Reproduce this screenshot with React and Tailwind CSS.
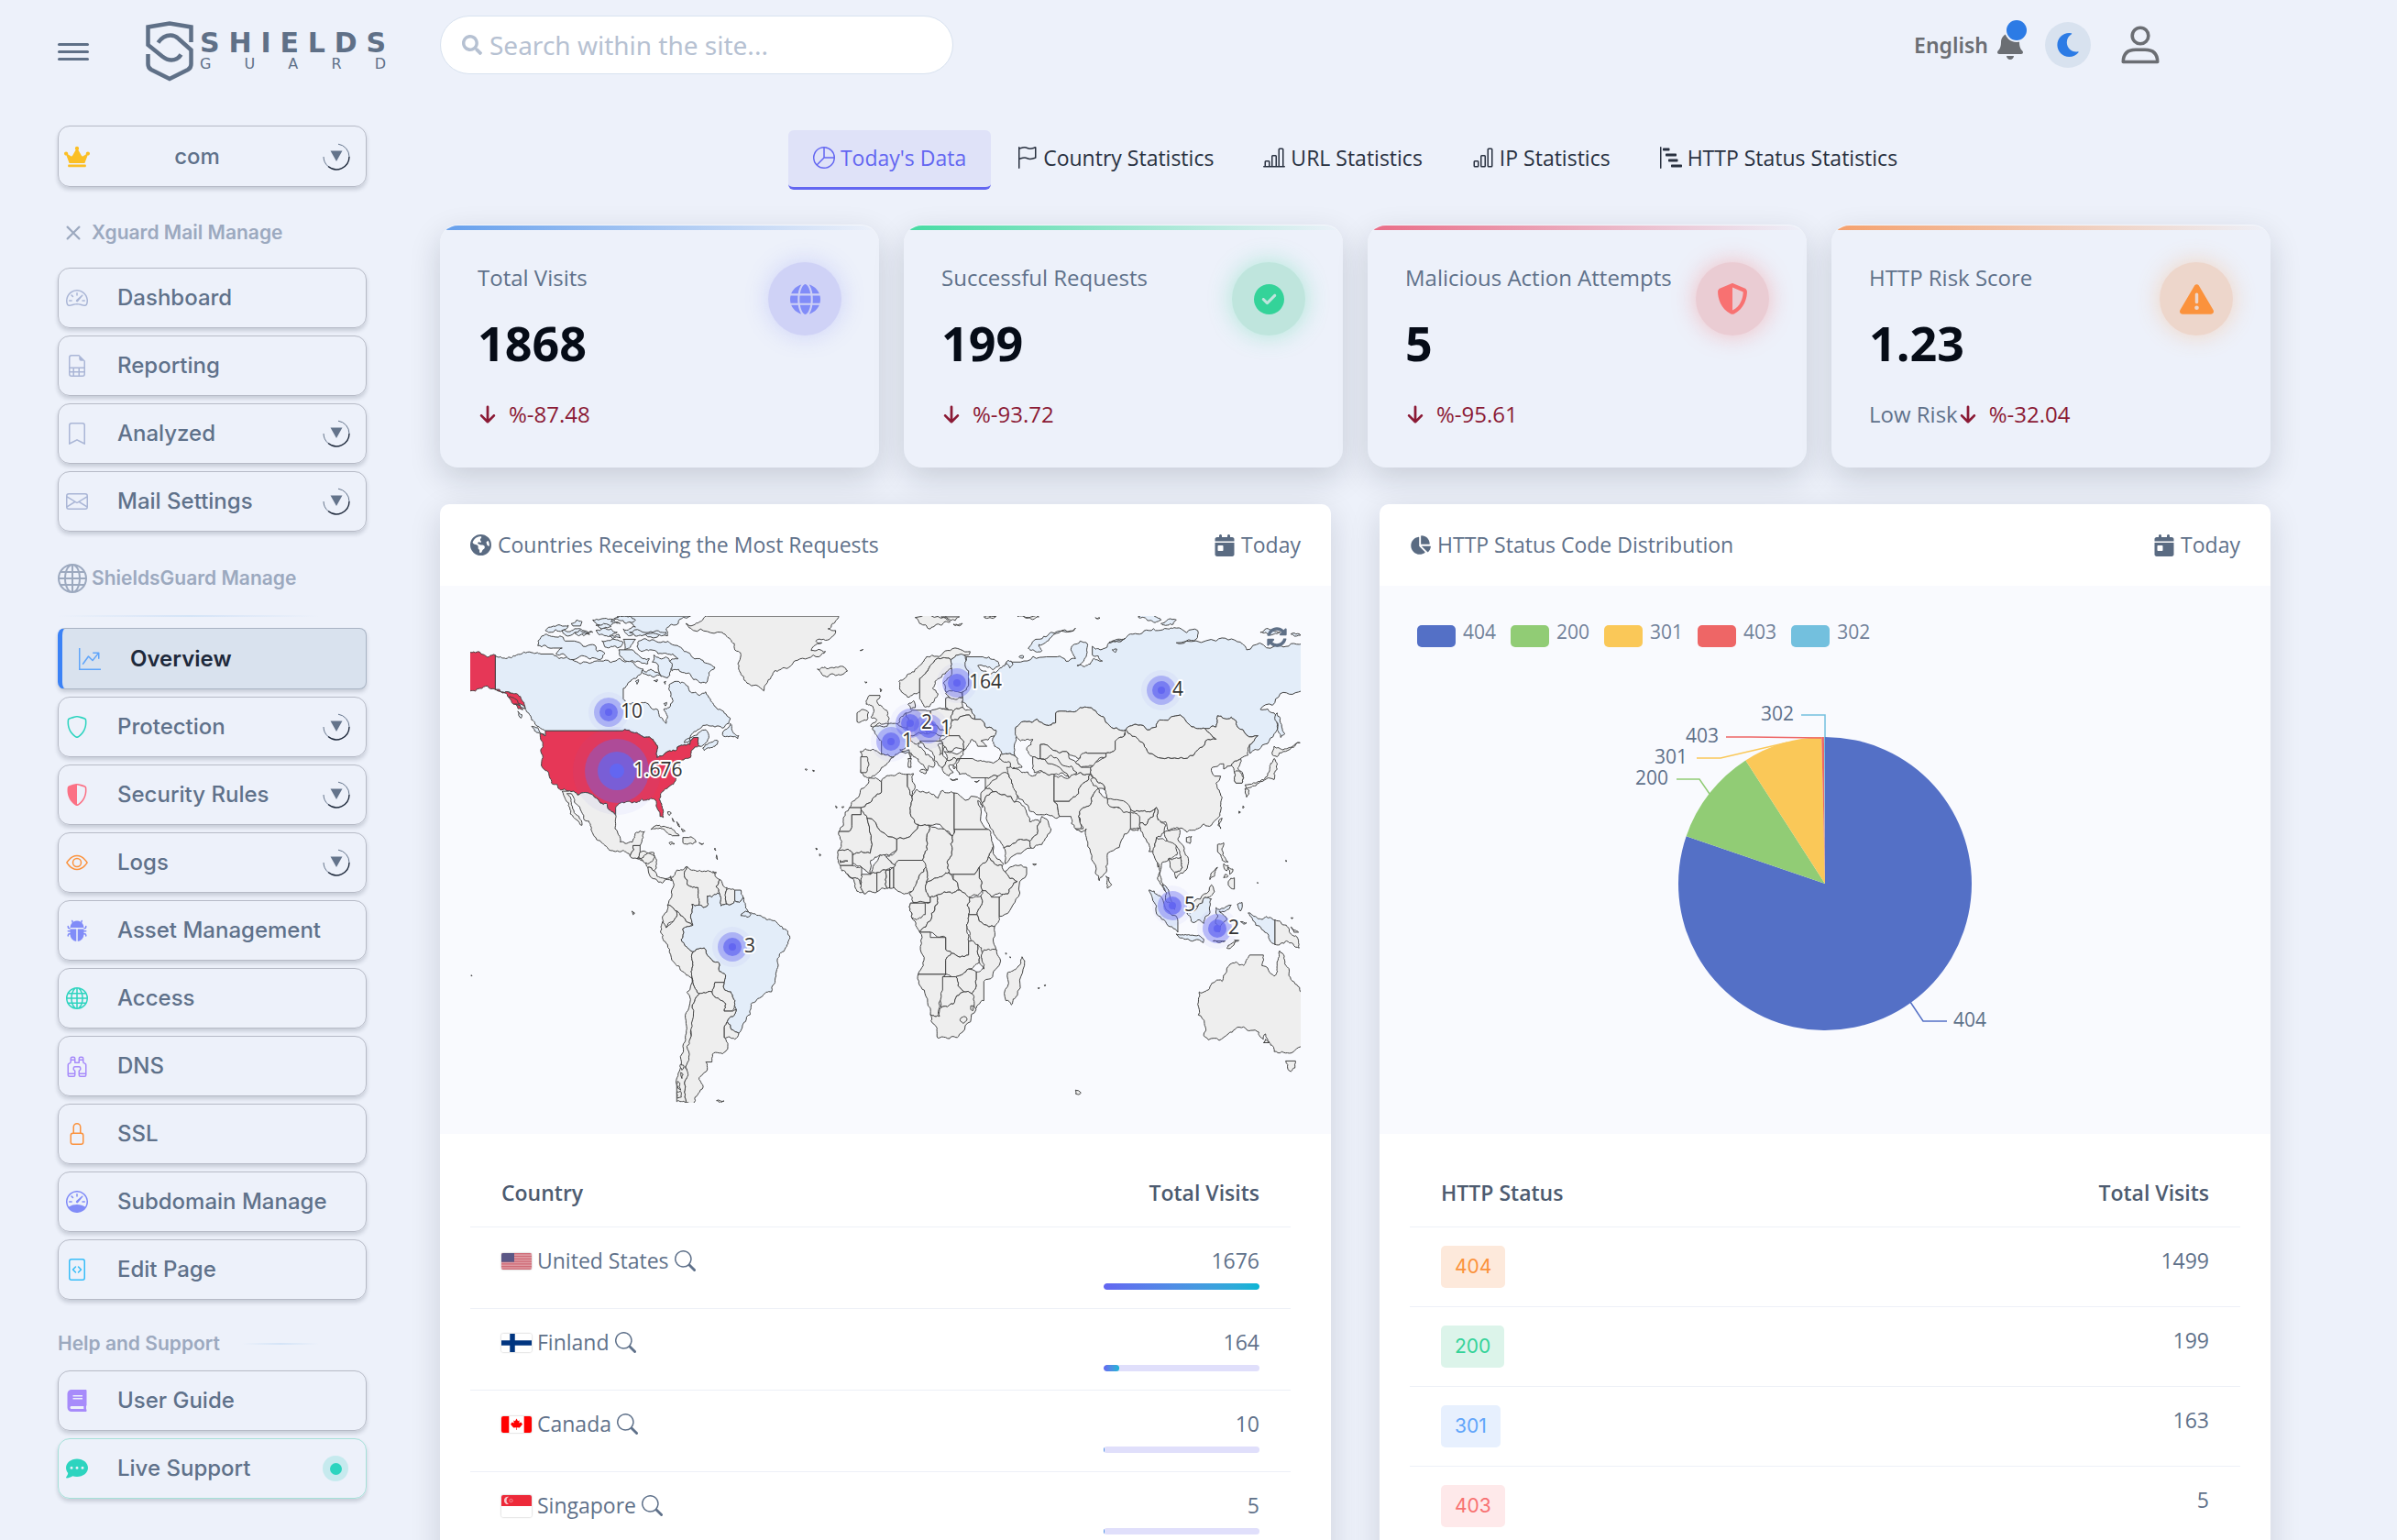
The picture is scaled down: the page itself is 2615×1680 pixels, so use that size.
import React from "react";
import {
  BsSpeedometer2, BsFileEarmarkSpreadsheet, BsBookmark, BsEnvelope, BsGraphUpArrow, BsShield,
  BsShieldShaded, BsEye, BsBugFill, BsGlobe, BsBinoculars, BsLock, BsSpeedometer, BsFileCode,
  BsX, BsPieChart, BsFlag, BsBarChartLine, BsBarChart, BsBarChartSteps, BsSearch,
} from "react-icons/bs";
import { FaCrown, FaSearch, FaBell, FaMoon, FaBook, FaSyncAlt } from "react-icons/fa";
import {
  FaGlobe, FaCircleCheck, FaShieldHalved, FaTriangleExclamation, FaArrowDown, FaEarthAmericas,
  FaChartPie, FaCalendarDay, FaCommentDots,
} from "react-icons/fa6";

/* ---------- sidebar ---------- */

const mailLinks = [
  { label: "Dashboard", Icon: BsSpeedometer2, color: "text-[#aab6d6]" },
  { label: "Reporting", Icon: BsFileEarmarkSpreadsheet, color: "text-[#aab6d6]" },
  { label: "Analyzed", Icon: BsBookmark, color: "text-[#aab6d6]", more: true },
  { label: "Mail Settings", Icon: BsEnvelope, color: "text-[#aab6d6]", more: true },
];

const manageLinks = [
  { label: "Overview", Icon: BsGraphUpArrow, color: "text-[#60a5fa]", active: true },
  { label: "Protection", Icon: BsShield, color: "text-[#2dd4bf]", more: true },
  { label: "Security Rules", Icon: BsShieldShaded, color: "text-[#fb7185]", more: true },
  { label: "Logs", Icon: BsEye, color: "text-[#fb923c]", more: true },
  { label: "Asset Management", Icon: BsBugFill, color: "text-[#818cf8]" },
  { label: "Access", Icon: BsGlobe, color: "text-[#2dd4bf]" },
  { label: "DNS", Icon: BsBinoculars, color: "text-[#a78bfa]" },
  { label: "SSL", Icon: BsLock, color: "text-[#fb923c]" },
  { label: "Subdomain Manage", Icon: BsSpeedometer, color: "text-[#818cf8]" },
  { label: "Edit Page", Icon: BsFileCode, color: "text-[#38bdf8]" },
];

const helpLinks = [
  { label: "User Guide", Icon: FaBook, color: "text-[#a78bfa]" },
  { label: "Live Support", Icon: FaCommentDots, color: "text-[#2dd4bf]", live: true },
];

function Chevron() {
  return (
    <svg viewBox="0 0 30 30" className="size-[30px] shrink-0" aria-hidden="true">
      <path d="M17 1.200A14 14 0 0 1 29 15" fill="none" stroke="#64748b" strokeWidth="1" />
      <path d="M1 15A14 14 0 0 0 6 25.500" fill="none" stroke="#64748b" strokeWidth="1" />
      <path d="M29 15A14 14 0 0 1 6 25.500" fill="none" stroke="#1e293b" strokeWidth="1.400" />
      <path d="M8.500 8.500H21.500L15 20Z" fill="#64748b" />
    </svg>
  );
}

function SideLink({ label, Icon, color, more, active, live }) {
  const look = active
    ? "h-[67px] rounded-lg border-[#a9b4c4] border-l-[5px] border-l-[#3b82f6] bg-[#d9e2ee] pl-[18px] font-semibold text-[#1e293b]"
    : live
      ? "h-[66px] rounded-[13px] border-[#a5e0d8] pl-2 font-medium text-[#5f718a]"
      : "h-[66px] rounded-[13px] border-[#b6bac6] pl-2 font-medium text-[#5f718a]";
  return (
    <li>
      <a
        href="#"
        className={`flex items-center border pr-[17px] text-2xl shadow-[0_3px_4px_rgba(30,41,59,0.18)] ${look}`}
      >
        <span className={`mr-8 flex w-6 shrink-0 justify-center ${color}`}>
          <Icon size={24} />
        </span>
        <span className="grow whitespace-nowrap">{label}</span>
        {more && <Chevron />}
        {live && (
          <span className="mr-0.5 flex size-7 items-center justify-center rounded-full bg-[#2dd4bf]/20">
            <span className="size-[13px] rounded-full bg-[#2dd4bf]" />
          </span>
        )}
      </a>
    </li>
  );
}

function Sidebar() {
  return (
    <aside className="w-[337px] shrink-0 pt-[25px] font-['Inter',sans-serif]">
      <button
        type="button"
        className="flex h-[67px] w-full items-center rounded-[13px] border border-[#b6bac6] pr-[17px] pl-1.5 text-2xl font-medium text-[#5f718a] shadow-[0_3px_4px_rgba(30,41,59,0.18)]"
      >
        <FaCrown size={28} className="text-[#fbbf24]" />
        <span className="grow pr-5">com</span>
        <Chevron />
      </button>
      <h2 className="flex h-[88px] items-center pt-3 text-[21px] font-semibold text-[#9ca9bf]">
        <BsX size={34} className="mr-[3px]" />
        Xguard Mail Manage
      </h2>
      <ul className="flex flex-col gap-2">
        {mailLinks.map((l) => <SideLink key={l.label} {...l} />)}
      </ul>
      <h2 className="flex h-[91px] items-center pt-[10px] text-[21px] font-semibold text-[#9ca9bf]">
        <BsGlobe size={32} className="mr-[5px]" />
        ShieldsGuard Manage
      </h2>
      <div className="mr-13 mb-3 h-0.5 bg-linear-to-r from-transparent via-[#d4e4f7] to-transparent" />
      <ul className="flex flex-col gap-2">
        {manageLinks.map((l) => <SideLink key={l.label} {...l} />)}
      </ul>
      <h2 className="flex h-[77px] items-center pt-[19px] pr-13 text-[21px] font-semibold text-[#9ca9bf]">
        Help and Support
        <span className="ml-6 h-0.5 grow bg-linear-to-r from-transparent via-[#d4e4f7] to-transparent" />
      </h2>
      <ul className="flex flex-col gap-2">
        {helpLinks.map((l) => <SideLink key={l.label} {...l} />)}
      </ul>
    </aside>
  );
}

/* ---------- header ---------- */

function Logo() {
  return (
    <a href="#" aria-label="Shields Guard" className="flex w-[262px] items-center gap-[7px] text-[#5f7087]">
      <svg viewBox="0 0 52 66" className="h-[66px] w-[52px] shrink-0" fill="none" stroke="currentColor" strokeWidth="4.500" aria-hidden="true">
        <path d="M49.500 23V6.500L26 2.500L2.500 6.500V26L18 38.500Q26.500 45 34 41Q37 39 38.500 36.500" />
        <path d="M13.500 23.500Q19 15.500 27 15.500Q32 15.500 36 19.500L49.500 31.500V47Q49.500 51 46 53L26 63L6 53Q2.500 51 2.500 47V36" />
      </svg>
      <span className="flex grow flex-col font-['DejaVu_Sans',sans-serif]">
        <span className="flex justify-between text-[30px] leading-7 font-bold">
          {[..."SHIELDS"].map((c, i) => <span key={i}>{c}</span>)}
        </span>
        <span className="flex justify-between text-base leading-[18px]">
          {[..."GUARD"].map((c, i) => <span key={i}>{c}</span>)}
        </span>
      </span>
    </a>
  );
}

function UserIcon() {
  return (
    <svg viewBox="0 0 42 42" className="size-[42px]" fill="none" stroke="currentColor" strokeWidth="3.600" strokeLinejoin="round" aria-hidden="true">
      <circle cx="21" cy="11" r="8.800" />
      <path d="M2.300 39.500Q2.300 26.200 16 26.200H26Q39.700 26.200 39.700 39.500Z" />
    </svg>
  );
}

function Header() {
  return (
    <header className="flex items-start pr-[259px] pl-[63px]">
      <div className="flex h-28 w-[417px] shrink-0 items-center gap-[62px]">
        <button type="button" aria-label="Toggle menu" className="flex flex-col gap-[5px]">
          <span className="h-[3px] w-[34px] rounded bg-[#5f7087]" />
          <span className="h-[3px] w-[34px] rounded bg-[#5f7087]" />
          <span className="h-[3px] w-[34px] rounded bg-[#5f7087]" />
        </button>
        <Logo />
      </div>
      <div className="flex h-[98px] grow items-center justify-between">
        <label className="flex h-16 w-[560px] items-center gap-2 rounded-[32px] border border-[#d8e2ef] bg-white px-[23px] text-[#b6c1d2]">
          <FaSearch size={22} />
          <input
            type="search"
            aria-label="Search"
            placeholder="Search within the site..."
            className="grow bg-transparent font-['Noto_Sans',sans-serif] text-[28px] outline-none placeholder:text-[#b6c1d2]"
          />
        </label>
        <div className="flex items-center text-[#6b6e73]">
          <button type="button" className="font-['Noto_Sans',sans-serif] text-[23px] font-semibold">English</button>
          <button type="button" aria-label="Notifications" className="relative ml-2">
            <FaBell size={32} />
            <span className="absolute -top-[11px] left-[12px] size-[22px] rounded-full bg-[#2c7be5] ring-2 ring-[#edf1fa]" />
          </button>
          <button type="button" aria-label="Dark mode" className="ml-[22px] flex size-[50px] items-center justify-center rounded-full bg-[#d8e2ef] text-[#2c7be5]">
            <FaMoon size={26} />
          </button>
          <button type="button" aria-label="Account" className="ml-[33px]">
            <UserIcon />
          </button>
        </div>
      </div>
    </header>
  );
}

/* ---------- tabs and stat cards ---------- */

const tabs = [
  { label: "Today's Data", Icon: BsPieChart },
  { label: "Country Statistics", Icon: BsFlag },
  { label: "URL Statistics", Icon: BsBarChartLine },
  { label: "IP Statistics", Icon: BsBarChart },
  { label: "HTTP Status Statistics", Icon: BsBarChartSteps },
];

function Tabs() {
  return (
    <nav className="flex justify-center">
      {tabs.map(({ label, Icon }, i) => (
        <button
          key={label}
          type="button"
          className={`flex h-[65px] items-center gap-1.5 rounded-md border-b-[3px] px-[27px] pb-0.5 text-[23px] ${
            i === 0 ? "border-[#6366f1] bg-[#dfe2f8] text-[#6366f1]" : "border-transparent text-[#28303f]"
          }`}
        >
          <Icon size={24} />
          {label}
        </button>
      ))}
    </nav>
  );
}

const stats = [
  {
    title: "Total Visits", value: "1868", change: "%-87.48", Icon: FaGlobe, size: 33,
    bar: "from-[#659fec]", badge: "bg-[#cfd2f6] text-[#818cf8] shadow-[0_0_26px_rgba(129,140,248,0.3)]",
  },
  {
    title: "Successful Requests", value: "199", change: "%-93.72", Icon: FaCircleCheck, size: 33,
    bar: "from-[#45dba2]", badge: "bg-[#bfe5dd] text-[#34d399] shadow-[0_0_26px_rgba(52,211,153,0.35)]",
  },
  {
    title: "Malicious Action Attempts", value: "5", change: "%-95.61", Icon: FaShieldHalved, size: 34,
    bar: "from-[#e96c86]", badge: "bg-[#eaccd3] text-[#f87171] shadow-[0_0_26px_rgba(248,113,113,0.4)]",
  },
  {
    title: "HTTP Risk Score", value: "1.23", change: "%-32.04", note: "Low Risk", Icon: FaTriangleExclamation, size: 37,
    bar: "from-[#f5a06c]", badge: "bg-[#edd6cb] text-[#fb923c] shadow-[0_0_26px_rgba(251,146,60,0.3)]",
  },
];

function StatCard({ title, value, change, note, Icon, size, bar, badge }) {
  return (
    <section className="overflow-hidden rounded-[20px] border-t border-[#f4f7fc] bg-[#edf1fa] shadow-[0_12px_34px_rgba(15,23,42,0.16)]">
      <div className={`h-[5px] bg-linear-to-r to-transparent ${bar}`} />
      <div className="flex justify-between px-[41px] pt-[35px] pb-[42px]">
        <div>
          <h3 className="text-[24px] leading-[33px] whitespace-nowrap text-[#5f718a]">{title}</h3>
          <p className="mt-4 text-[52px] leading-[78px] font-bold text-[#060c17]">{value}</p>
          <p className="mt-[22px] flex items-center text-[24px] leading-[33px] font-medium text-[#8b1a35]">
            {note && <span className="text-[#5f718a]">{note}</span>}
            <FaArrowDown size={22} className="mr-3" />
            {change}
          </p>
        </div>
        <div className={`-ml-10 flex size-20 shrink-0 items-center justify-center rounded-full ${badge}`}>
          <Icon size={size} />
        </div>
      </div>
    </section>
  );
}

/* ---------- world map ---------- */

// Country outlines, two sheets with their own origin. "b" marks a country with visits, "r" the leading one.
const west = [
  "b 181,195 215,205 250,195 300,188 330,192 370,192 390,205 440,212 480,215 520,212 560,216 585,205 600,212 620,210 640,225 665,235 640,262 615,275 600,290 600,320 625,335 660,330 690,345 712,350 718,370 740,390 745,370 732,350 750,345 763,325 755,300 750,280 775,270 800,275 820,300 850,310 870,300 885,320 910,350 950,375 945,390 900,400 850,405 825,420 800,445 830,425 870,408 880,425 870,445 850,455 845,430 830,430 818,450 790,452 770,468 745,470 710,487 712,455 690,432 650,420 598,411 345,411 325,400 300,380 290,360 270,345 245,318 215,300 181,293",
  "b 330,145 370,142 410,155 440,155 500,165 540,190 530,205 480,200 420,205 380,192 400,175 370,175 320,168",
  "b 650,155 700,152 760,165 800,185 840,205 880,220 900,230 880,245 870,275 830,265 800,245 760,240 750,215 780,205 740,190 690,180 660,185 645,170",
  "b 580,84 820,84 780,105 740,120 745,140 690,143 620,140 600,120 640,115 620,100",
  "b 345,125 380,112 420,110 400,125 360,130",
  "b 400,125 440,120 470,125 500,130 470,140 410,138",
  "b 500,95 550,93 590,105 560,110 510,103",
  "b 510,125 560,120 580,130 540,140",
  "b 530,155 570,150 600,160 580,175 540,172",
  "b 600,150 640,150 620,175 605,180",
  "b 430,105 465,100 460,112 435,112", "b 440,132 475,128 490,136 455,140", "b 510,110 545,106 560,114 525,118", "b 555,140 585,136 590,146 565,148", "b 620,130 690,128 740,130 735,138 660,140",
  "b 585,180 630,180 650,195 685,205 680,220 640,215 600,205",
  "b 600,84 640,95 610,105 560,100",
  "b 700,195 740,200 760,225 745,260 720,250 715,225 695,215",
  "b 660,240 690,235 725,255 700,258 675,250",
  "b 930,410 950,390 955,408 978,425 975,433 945,428 925,422",
  "b 860,460 880,445 910,440 900,455 865,467",
  "b 300,398 320,402 342,422 325,418",
  "b 255,355 268,365 265,375",
  "b 640,270 650,265 645,278", "b 700,268 712,265 708,272", "b 733,272 739,270 737,278", "b 733,333 742,330 738,340",
  "r 345,411 598,411 650,420 690,432 712,455 710,487 745,470 770,468 790,452 818,450 830,430 845,430 850,455 822,468 820,487 790,495 780,515 768,530 772,550 750,570 722,590 718,605 730,635 731,658 720,655 710,630 705,608 690,603 660,605 645,615 615,612 590,617 575,630 575,650 560,640 545,618 525,617 505,600 490,590 450,594 420,583 395,580 365,560 350,525 335,515 330,470 333,440 328,420 345,425",
  "r 40,183 100,187 140,193 181,195 181,293 215,300 245,305 275,330 280,348 255,335 230,320 205,303 181,293 130,290 98,298 40,298",
  "r 225,315 245,320 260,335 240,335", "r 245,335 262,338 272,350 256,348",
  "g 875,84 850,100 805,105 830,125 920,130 950,150 965,180 985,195 975,220 985,250 1005,275 1060,297 1075,265 1095,240 1130,232 1170,210 1240,200 1262,185 1215,182 1250,160 1230,155 1280,145 1295,125 1270,120 1285,105 1305,84",
  "g 1235,235 1250,230 1290,232 1320,228 1334,240 1310,252 1270,257 1250,250",
  "g 400,583 420,583 450,594 490,590 505,600 525,617 545,618 560,640 575,650 573,690 590,728 605,732 630,728 640,702 670,698 665,715 655,738 632,738 635,750 622,768 598,752 575,755 540,738 505,712 495,685 470,660 440,615 430,590 415,590 430,615 455,655 465,680 440,660 425,630 410,605",
  "g 622,768 635,750 632,738 655,738 655,757 645,775",
  "g 645,775 655,757 700,758 703,770 700,810 680,800 670,785",
  "g 645,775 670,765 703,768 680,790",
  "g 680,800 700,810 710,825 735,832 755,825 758,838 745,835 728,845 705,833 685,820",
  "g 690,692 710,680 740,685 770,700 783,710 760,710 735,693 705,690",
  "g 795,715 815,715 838,728 815,732 795,730", "g 750,730 768,733 755,736", "g 848,730 863,732 856,735",
  "g 745,642 757,645 750,652", "g 760,660 767,670 762,668", "g 775,670 785,685 780,682", "g 790,690 802,697 795,699",
  "g 900,745 903,752 899,750", "g 905,765 908,778 904,772", "g 893,812 905,815 898,819",
  "g 755,830 775,808 808,798 800,825 810,850 845,858 848,890 845,908 825,905 828,965 800,945 775,925 745,908 758,885",
  "g 800,825 808,798 830,808 870,812 900,818 915,835 903,855 915,875 890,885 875,882 878,905 862,915 845,908 848,890 845,858 810,850",
  "g 915,835 940,858 935,885 940,905 920,910 915,875 903,855",
  "g 940,862 965,865 965,895 940,905 935,885",
  "b 965,865 985,865 992,885 980,900 965,895",
  "g 745,908 775,925 770,945 745,965 740,972 730,960 728,940",
  "g 728,955 740,972 770,945 775,925 800,945 828,965 795,975 790,1005 810,1030 832,1040 828,1080 825,1115 790,1095 770,1075 745,1020 722,985",
  "b 828,965 825,905 845,908 862,915 878,905 875,882 890,885 915,875 920,910 940,905 965,895 980,900 992,885 1000,915 1020,930 1055,942 1090,952 1110,965 1138,982 1141,1010 1125,1040 1105,1060 1100,1110 1085,1155 1055,1168 1018,1190 1015,1220 1000,1240 978,1273 940,1240 970,1205 965,1190 952,1155 932,1150 930,1128 935,1110 912,1090 910,1070 865,1030 832,1040 810,1030 790,1005 795,975",
  "b 985,938 1000,925 1018,935 1005,942",
  "g 832,1040 865,1030 910,1070 912,1090 935,1110 930,1128 900,1128 890,1155 848,1160 825,1115 828,1080",
  "g 890,1155 900,1128 930,1128 932,1150 952,1155 965,1190 955,1210 930,1210 935,1190 900,1170",
  "g 940,1240 978,1273 965,1290 930,1285 930,1255",
  "g 848,1160 890,1155 900,1170 935,1190 930,1210 955,1210 970,1205 940,1240 930,1255 930,1285 942,1310 935,1325 892,1333 890,1355 870,1355 875,1370 860,1390 848,1405 860,1420 850,1440 835,1455 830,1472 805,1470 800,1440 808,1400 805,1370 818,1290 825,1200 838,1170",
  "g 825,1115 848,1160 838,1170 825,1200 820,1270 808,1310 802,1370 808,1400 800,1440 805,1470 775,1468 775,1420 788,1370 795,1310 808,1260 815,1200",
  "g 778,1410 785,1415 788,1435 779,1430", "g 776,1440 787,1438 790,1455 778,1458", "g 788,1385 796,1390 792,1402", "g 787,1362 797,1364 792,1378",
  "g 905,1465 930,1466 920,1471",
  "g 628,925 637,930 632,935", "g 103,1107 105,1109 102,1110",
  "g 1195,520 1202,521 1199,524", "g 1220,523 1226,525 1222,527", "g 1295,625 1300,630 1297,631", "g 1315,628 1322,627 1318,631", "g 1230,745 1236,748 1232,750", "g 1242,762 1247,765 1243,768",
  "g 1375,182 1385,179 1380,182", "g 1391,271 1398,272 1394,275", "g 1440,290 1446,294 1442,300",
  "g 1405,310 1440,310 1430,325 1450,345 1470,375 1468,392 1410,398 1430,380 1410,372 1420,350 1395,335",
  "g 1365,360 1385,350 1403,358 1398,380 1365,385",
];

const east = [
  "g 70,300 62,270 100,248 140,215 170,195 230,182 295,185 290,195 255,195 232,208 200,205 170,220 145,250 130,262 130,300 110,305 90,315",
  "g 130,262 145,250 170,220 200,205 232,208 235,235 205,250 180,270 172,290 190,305 175,330 145,342 130,320",
  "b 232,208 255,195 280,198 290,240 290,280 270,300 240,302 215,300 208,275 235,250 235,235",
  "b 282,200 330,200 380,212 392,225 370,237 320,225 345,240 380,245 415,215 460,215 545,200 580,200 640,205 625,180 655,155 680,165 675,200 645,225 670,228 700,205 728,212 695,195 695,170 720,180 760,155 800,150 820,135 880,125 940,120 970,118 1040,125 1035,150 970,160 1100,155 1180,158 1200,180 1290,170 1320,172 1390,168 1390,300 1310,305 1245,350 1290,360 1300,375 1290,420 1240,465 1210,475 1210,450 1237,425 1170,400 1150,372 1105,368 1100,400 1065,405 1015,395 915,380 905,400 845,395 805,408 745,390 710,360 655,345 600,355 575,360 575,388 545,395 480,385 443,405 445,440 450,490 400,478 375,455 368,440 380,410 330,378 310,378 300,350 270,330 270,300 290,280 290,240",
  "b 1300,360 1310,375 1315,400 1325,420 1312,430 1302,400",
  "b 485,175 510,150 560,130 640,118 635,125 560,145 520,165 530,182 500,180",
  "b 845,86 900,85 920,95 880,97", "b 920,105 970,95 960,107", "b 750,158 800,148 790,156", "b 760,180 775,178 770,188",
  "b 1245,130 1285,125 1310,130 1280,138", "b 1345,135 1390,137 1370,139", "g 705,88 720,89 712,91", "g 450,85 520,86 480,88", "g 340,86 380,85 360,88",
  "g 115,88 200,90 230,100 200,110 165,120 130,105", "g 200,86 260,86 230,95", "g 240,107 270,105 255,110",
  "b 412,220 420,210 435,220 425,232", "b 455,200 470,198 468,204",
  "g 215,318 270,315 272,345 240,355 215,345", "g 215,305 268,303 270,315 235,320", "b 198,348 222,348 220,356 198,355",
  "g 240,355 272,345 300,350 310,378 235,382",
  "g 165,355 215,350 240,355 235,382 235,395 225,408 175,395 165,380",
  "g 85,360 105,352 150,352 165,355 165,380 175,395 150,400 155,420 100,425 90,400",
  "g 92,335 110,325 115,345 100,350", "g 55,395 85,360 90,400 75,402",
  "b -25,405 15,400 45,390 75,402 90,405 100,425 95,440 105,465 60,475 45,485 5,478 5,440 -15,420",
  "g 235,382 310,378 330,378 380,410 375,425 330,440 350,455 320,455 300,435 275,465 260,425 225,425 225,408",
  "g -65,470 -30,467 5,478 45,485 15,510 0,525 -30,545 -55,535 -63,530", "g -63,485 -42,485 -45,530 -63,530",
  "g 65,465 100,440 130,440 125,455 150,480 180,505 175,515 160,510 155,525 135,505 110,485 95,465 75,470",
  "g 130,525 155,522 150,533", "g 92,490 103,490 102,515 93,515", "g 95,475 103,475 100,488",
  "g 100,425 155,420 200,425 195,440 130,445 100,440", "g 150,400 175,395 225,408 225,425 200,425 155,420",
  "g 130,440 195,440 215,450 205,475 220,495 205,515 190,505 175,480 150,460", "g 190,450 205,445 205,475 195,480",
  "g 200,440 225,425 260,425 275,465 225,470 210,455", "g 210,470 275,465 262,490 220,495",
  "g 205,515 220,495 262,490 245,505 225,510 240,530 225,540", "g 230,548 255,549 245,552", "g 240,510 248,515 243,520", "g 255,520 262,530 257,528",
  "g 262,490 300,490 340,497 400,490 430,500 425,535 385,540 345,545 300,545 260,535 250,505",
  "g 310,555 325,552 318,558",
  "g 395,478 450,490 465,515 430,520 425,500 390,490",
  "g 345,545 385,540 375,560 345,580", "g 345,575 385,540 420,535 430,560 450,600 440,615 370,585",
  "g 330,590 345,575 370,585 345,600 330,620",
  "g 415,515 465,530 500,540 530,525 570,535 570,570 570,612 588,655 575,660 525,650 490,640 455,605 440,580 430,550",
  "g 345,600 370,585 440,615 470,625 490,660 490,670 525,672 515,705 490,725 415,740 405,745 385,720 350,650 330,620",
  "g 405,745 415,740 490,725 495,745 410,790", "g 525,672 530,655 560,690 530,735 495,745 490,725 515,705",
  "g 443,405 480,385 545,395 575,388 575,360 600,355 655,345 710,360 745,390 805,408 800,425 770,440 770,465 740,475 680,475 650,490 610,470 525,450 525,490 500,485 480,465 495,450 500,435 460,440 445,425",
  "g 500,485 525,490 525,450 610,470 640,500 660,515 690,515 690,535 655,530 620,545 570,535 530,525 505,530 500,505",
  "g 525,490 560,480 600,510 645,530 620,545", "g 640,500 680,475 740,475 740,485 690,510 660,515",
  "g 570,540 620,545 655,530 690,535 665,560 650,590 620,612 570,612",
  "g 570,612 620,612 650,590 665,560 690,535 715,575 700,590 690,620 650,655 660,700 640,690 625,655 588,655",
  "g 690,515 740,485 740,475 770,465 770,440 805,408 840,430 880,475 965,488 1040,465 1100,435 1065,405 1100,400 1105,368 1150,372 1170,400 1237,425 1210,450 1205,480 1180,490 1150,510 1125,520 1125,505 1085,518 1095,540 1115,540 1100,560 1120,600 1115,640 1085,680 1040,690 1005,700 980,690 945,695 935,670 910,665 905,630 860,640 820,635 780,630 745,605 735,570 700,545",
  "g 805,408 845,395 905,400 915,380 1015,395 1065,405 1100,435 1040,465 965,488 880,475 840,430",
  "g 650,655 690,620 700,590 715,575 745,605 780,630 820,635 860,640 905,630 895,655 870,680 850,675 845,695 820,690 800,705 745,760 742,810 718,838 705,815 680,740 675,690 660,700 640,690 665,690",
  "g 700,545 735,570 735,580 715,575 690,550",
  "g 745,605 820,632 818,645 745,618", "g 820,645 850,655 850,690 820,692",
  "g 740,825 750,830 758,850 745,860",
  "g 850,675 870,680 895,655 905,630 910,665 935,680 930,700 905,715 900,740 915,770 910,800 900,755 880,755 865,715",
  "g 905,715 935,725 970,735 972,765 945,775 925,785 920,830 935,860 945,880 930,865 908,830 912,790 900,740",
  "g 930,700 980,690 975,720 1000,765 1007,795 970,832 965,815 990,800 985,770 965,735 940,725",
  "g 945,775 985,770 990,800 965,815 950,800", "b 925,850 945,865 965,920 940,900",
  "g 1003,715 1020,712 1015,732 1003,728", "g 1110,665 1120,660 1115,690 1106,680",
  "g 1150,510 1180,490 1172,520 1190,545 1185,560 1165,560 1160,530", "g 1160,530 1175,525 1190,545 1185,560 1165,560",
  "g 1290,490 1300,520 1290,550 1240,560 1200,575 1195,565 1250,550 1275,525 1285,500",
  "g 1285,480 1290,455 1320,465 1350,458 1375,445 1320,470 1300,485", "g 1195,575 1208,580 1200,600",
  "g 1188,625 1192,628 1188,632", "g 1175,640 1180,643 1175,646",
  "g 1105,735 1125,730 1122,765 1140,785 1120,780 1105,755", "g 1125,790 1140,795 1135,810", "g 1140,800 1155,805 1145,820", "g 1130,820 1140,825 1125,830", "g 1140,840 1160,830 1160,862 1140,850", "g 1080,835 1105,800 1095,825",
  "b 1005,930 1040,912 1065,885 1085,890 1080,930 1060,960 1020,955", "g 1030,895 1085,850 1095,870 1065,885 1040,912 1010,920",
  "b 880,865 910,880 945,925 975,955 975,985 935,955 905,910", "b 970,990 1010,992 1060,1005 1058,1015 1000,1005",
  "b 1100,915 1150,908 1140,920 1110,925 1135,950 1120,960 1110,985 1098,960",
  "b 1205,930 1235,945 1265,940 1293,950 1293,1020 1270,990 1230,965", "g 1293,950 1330,965 1345,990 1370,1010 1372,1030 1330,1010 1293,1020",
  "g 1135,1030 1165,1012 1150,1028", "b 1090,1010 1130,1010 1110,1015", "b 1170,905 1185,900 1180,925", "b 1180,955 1200,958 1190,962", "b 1160,1008 1175,1008 1168,1011", "g 1345,970 1370,985 1355,985",
  "g 1045,1155 1080,1140 1120,1125 1135,1095 1165,1070 1190,1080 1210,1050 1255,1050 1250,1080 1290,1110 1300,1080 1308,1038 1325,1075 1345,1120 1365,1135 1390,1170 1390,1312 1340,1330 1290,1325 1275,1300 1262,1275 1255,1290 1240,1270 1190,1255 1140,1275 1075,1292 1060,1280 1062,1245 1040,1190",
  "g 1255,1300 1275,1300 1262,1290", "g 1328,1352 1360,1352 1358,1372 1345,1382 1335,1375",
  "g -35,545 5,555 5,585 -20,600 -62,630 -100,630 -70,600 -60,575",
  "g -100,630 -62,630 -62,650 -92,650 -92,680 -102,698 -135,698 -120,660",
  "g -135,698 -102,698 -92,680 -92,650 -62,650 -62,638 -42,660 -32,760 -90,765 -105,748 -137,752",
  "g -62,630 -20,600 5,585 5,555 40,538 90,535 90,570 105,600 108,660 125,678 55,720 -42,660",
  "g 90,535 110,533 115,570 105,600 90,570", "g 105,600 120,578 160,585 190,603 205,580 243,588 243,712 160,680 125,678 108,660",
  "g 243,588 320,600 335,630 320,610 355,692 243,692",
  "g -42,660 55,720 55,750 0,765 -30,780 -32,820 -60,800 -90,790 -90,765 -32,760",
  "g 55,720 125,678 160,680 155,750 140,780 60,780 50,795 20,770 55,750",
  "g 160,680 237,712 235,755 220,785 225,815 190,830 150,850 155,815 140,780 155,750",
  "g 243,692 355,692 370,735 355,770 325,800 310,820 240,820 225,815 220,785 235,755 237,712",
  "g 370,735 405,790 400,795 355,770", "g 355,770 400,795 410,812 450,840 420,875 365,885 335,865 325,830 325,800",
  "g 410,812 480,800 480,820 445,890 390,940 390,885 420,875 450,840",
  "g -137,752 -105,748 -90,765 -90,795 -130,795", "g -130,780 -105,782 -130,787", "g -130,795 -90,795 -60,800 -60,820 -62,850 -80,830 -105,820 -125,810",
  "g -105,820 -80,830 -62,850 -50,876 -80,860", "g -60,820 -32,820 -10,815 -10,870 -50,876 -62,850",
  "g -32,820 0,765 20,770 50,795 20,808 -10,815", "g -10,815 20,808 25,860 -10,870",
  "g 20,808 45,800 45,858 25,860", "g 32,804 32,860",
  "g 50,795 60,780 140,780 150,800 120,845 90,875 70,872 45,858 45,800",
  "g 150,800 155,815 150,850 165,885 165,900 108,900 95,875 120,845",
  "g 150,850 190,830 225,815 240,835 260,865 210,870 185,880 165,885",
  "g 240,820 310,820 325,800 325,830 335,865 320,880 295,885 260,865 240,835",
  "g 100,902 165,900 165,885 185,880 180,920 150,970 130,985 105,945", "g 100,902 148,902 148,935 120,950 105,945",
  "g 185,880 210,870 260,865 295,885 290,935 285,975 290,1010 290,1050 235,1045 215,1035 215,1000 165,985 130,985 150,970 180,920",
  "g 295,885 330,882 328,915 318,935 290,935", "g 335,865 365,885 390,885 390,940 375,970 318,935 328,915 330,882",
  "g 290,935 318,935 375,970 380,1035 335,1045 300,1015 285,975",
  "g 130,985 165,985 165,1000 215,1000 215,1035 235,1045 215,1065 215,1105 125,1105 140,1050",
  "g 215,1065 235,1045 290,1050 290,1010 320,1020 325,1070 290,1090 248,1112 215,1105",
  "g 330,1045 382,1035 384,1085 340,1125 340,1180 305,1205 300,1160 315,1120 315,1098 340,1085",
  "g 320,1020 335,1045 340,1090 325,1070",
  "g 248,1112 290,1090 315,1098 315,1120 300,1160 275,1155", "g 205,1112 248,1112 275,1155 240,1190 200,1200",
  "g 125,1105 215,1105 205,1112 205,1150 195,1225 165,1220 145,1150",
  "g 165,1220 195,1225 200,1200 240,1190 275,1155 300,1160 315,1205 270,1270 240,1282 190,1287 180,1250",
  "g 262,1235 275,1225 285,1232 272,1245", "g 297,1195 307,1195 305,1208 297,1205",
  "g 465,1055 473,1080 450,1165 430,1192 412,1180 418,1100 450,1085",
  "g 500,791 512,791 506,794", "g 517,1144 522,1143 520,1147", "g 538,1136 542,1135 540,1139", "g 640,1435 658,1443 641,1446", "g 1328,780 1332,782 1329,784", "g 1235,843 1238,844 1236,846", "g 1345,944 1352,944 1349,947", "g 411,1044 415,1046 412,1048", "g 425,1055 429,1057 426,1058",
];

const fills = { b: "#e3edf9", r: "#e63757", g: "#eeeeee" };

// Repeatable noise taken from the two end points, so that neighbours share one border line.
function noise(ax, ay, bx, by) {
  const v = Math.sin((ax + bx) * 12.9898 + (ay + by) * 78.233 + Math.abs(ax - bx) * 3.7) * 43758.5453;
  return (v - Math.floor(v) - 0.5) * 2;
}

function rough(a, b, depth) {
  const dx = b[0] - a[0];
  const dy = b[1] - a[1];
  const len = Math.hypot(dx, dy);
  if (depth === 0 || len < 7 || dx === 0 || dy === 0) return [b];
  const flip = a[0] < b[0] || (a[0] === b[0] && a[1] < b[1]) ? 1 : -1;
  const k = noise(a[0], a[1], b[0], b[1]) * 0.2 * flip;
  const m = [(a[0] + b[0]) / 2 - dy * k, (a[1] + b[1]) / 2 + dx * k];
  return [...rough(a, m, depth - 1), ...rough(m, b, depth - 1)];
}

function outline(points) {
  const pts = points.split(" ").map((p) => p.split(",").map(Number));
  const out = [pts[0]];
  pts.forEach((p, i) => out.push(...rough(p, pts[(i + 1) % pts.length], 3)));
  return "M" + out.map((p) => p[0].toFixed(1) + " " + p[1].toFixed(1)).join("L") + "Z";
}

function Land({ shapes, transform }) {
  return (
    <g transform={transform} stroke="#444" strokeLinejoin="round">
      {shapes.map((s) => (
        <path key={s} d={outline(s.slice(2))} fill={fills[s[0]]} strokeWidth="1" vectorEffect="non-scaling-stroke" />
      ))}
    </g>
  );
}

const markers = [
  { x: 151, y: 105, label: "10", dx: 13 },
  { x: 160, y: 169, label: "1.676", dx: 18, big: true },
  { x: 286, y: 361, label: "3", dx: 13 },
  { x: 531, y: 73, label: "164", dx: 13 },
  { x: 754, y: 81, label: "4", dx: 12 },
  { x: 480, y: 117, label: "2", dx: 12 },
  { x: 500, y: 123, label: "1", dx: 13 },
  { x: 459, y: 137, label: "1", dx: 12 },
  { x: 766, y: 316, label: "5", dx: 13 },
  { x: 815, y: 341, label: "2", dx: 12 },
];

function WorldMap() {
  return (
    <div className="relative px-[33px] pt-[33px] pb-[34px]">
      <svg viewBox="0 0 906 531" className="block h-auto w-full" role="img" aria-label="Requests by country">
        <Land shapes={west} transform="translate(-33 -32) scale(0.3333 0.3827)" />
        <Land shapes={east} transform="translate(447 -32) scale(0.3333 0.3827)" />
        {markers.map((m, i) => (
          <g key={i} fill="#6366f1">
            <circle cx={m.x} cy={m.y} r={m.big ? 48 : 22} opacity="0.050" />
            <circle cx={m.x} cy={m.y} r={m.big ? 35 : 16} opacity="0.400" />
            <circle cx={m.x} cy={m.y} r={m.big ? 21 : 10} opacity="0.700" />
            <circle cx={m.x} cy={m.y} r={m.big ? 8 : 4} />
          </g>
        ))}
        {markers.map((m, i) => (
          <text
            key={i}
            x={m.x + m.dx}
            y={m.y + 6}
            className="font-['Open_Sans',sans-serif] text-[21px]"
            fill="#333"
            stroke="#fff"
            strokeWidth="4"
            strokeLinejoin="round"
            paintOrder="stroke"
          >
            {m.label}
          </text>
        ))}
      </svg>
      <button type="button" aria-label="Refresh map" className="absolute top-[45px] right-12 text-[#5f7087]">
        <FaSyncAlt size={22} />
      </button>
    </div>
  );
}

/* ---------- pie chart ---------- */

const codes = [
  { code: "404", n: 1499, color: "#5470c6", box: "bg-[#5470c6]" },
  { code: "200", n: 199, color: "#91cc75", box: "bg-[#91cc75]" },
  { code: "301", n: 163, color: "#fac858", box: "bg-[#fac858]" },
  { code: "403", n: 5, color: "#ee6666", box: "bg-[#ee6666]" },
  { code: "302", n: 2, color: "#73c0de", box: "bg-[#73c0de]" },
];

const callouts = [
  { code: "404", color: "#5470c6", line: "579,454 593,475 619,475", x: 626, y: 481, anchor: "start" },
  { code: "200", color: "#91cc75", line: "360,227 349,211 324,211", x: 315, y: 217, anchor: "end" },
  { code: "301", color: "#fac858", line: "445,171 372,188 346,188", x: 336, y: 194, anchor: "end" },
  { code: "403", color: "#ee6666", line: "482,166 405,165 378,165", x: 370, y: 171, anchor: "end" },
  { code: "302", color: "#73c0de", line: "486,165 486,141 460,141", x: 452, y: 147, anchor: "end" },
];

function Pie() {
  const total = codes.reduce((s, c) => s + c.n, 0);
  let at = 0;
  const slices = codes.map((c) => {
    const a0 = (at / total) * 2 * Math.PI;
    at += c.n;
    const a1 = (at / total) * 2 * Math.PI;
    const p = (a) => `${486 + 160 * Math.sin(a)} ${325 - 160 * Math.cos(a)}`;
    return { ...c, d: `M486 325L${p(a0)}A160 160 0 ${a1 - a0 > Math.PI ? 1 : 0} 1 ${p(a1)}Z` };
  });
  return (
    <div className="relative">
      <svg viewBox="0 0 972 598" className="block h-auto w-full" role="img" aria-label="HTTP status codes">
        {slices.map((s) => <path key={s.code} d={s.d} fill={s.color} />)}
        {callouts.map((c) => (
          <g key={c.code}>
            <polyline points={c.line} fill="none" stroke={c.color} strokeWidth="1.500" />
            <text x={c.x} y={c.y} textAnchor={c.anchor} fill="#5f718a" className="font-['Open_Sans',sans-serif] text-[21px]">
              {c.code}
            </text>
          </g>
        ))}
      </svg>
      <ul className="absolute top-9 left-[41px] flex gap-4">
        {codes.map((c) => (
          <li key={c.code} className="flex items-end gap-2 text-[21px] leading-[29px] text-[#718199]">
            <span className={`h-6 w-[42px] rounded-[5px] ${c.box}`} />
            <span className="pb-0.5">{c.code}</span>
          </li>
        ))}
      </ul>
    </div>
  );
}

/* ---------- tables ---------- */

function Flag({ code }) {
  const shared = "w-[33px] rounded-[2px] shadow-[0_0_2px_rgba(0,0,0,0.35)]";
  if (code === "us")
    return (
      <svg viewBox="0 0 33 18" className={`h-[18px] ${shared}`} aria-hidden="true">
        <rect width="33" height="18" fill="#de9aa2" />
        <path d="M0 0.700H33M0 3.500H33M0 6.300H33M0 9.100H33M0 11.900H33M0 14.700H33M0 17.400H33" stroke="#cf6a76" strokeWidth="1.200" />
        <rect width="14" height="9.700" fill="#5b5785" />
      </svg>
    );
  if (code === "fi")
    return (
      <svg viewBox="0 0 33 20" className={`h-5 ${shared}`} aria-hidden="true">
        <rect width="33" height="20" fill="#fff" />
        <path d="M0 10H33M12 0V20" stroke="#003580" strokeWidth="5.500" />
      </svg>
    );
  if (code === "ca")
    return (
      <svg viewBox="0 0 33 18" className={`h-[18px] ${shared}`} aria-hidden="true">
        <rect width="33" height="18" fill="#fff" />
        <path d="M0 0H8.300V18H0ZM24.700 0H33V18H24.700Z" fill="#f00" />
        <path d="M16.500 2.500L18 5.200L19.700 4.500L19.300 7.500L21.300 6.500L23 8.800L19.800 12.400L16.800 12.200V15H16.200V12.200L13.200 12.400L10 8.800L11.700 6.500L13.700 7.500L13.300 4.500L15 5.200Z" fill="#f00" />
      </svg>
    );
  return (
    <svg viewBox="0 0 33 24" className={`h-6 ${shared}`} aria-hidden="true">
      <rect width="33" height="24" fill="#fff" />
      <rect width="33" height="12" fill="#ed2939" />
      <path d="M8 1.800A4.200 4.200 0 1 0 8 10A4.600 4.600 0 0 1 8 1.800Z" fill="#f9c5ca" />
      <circle cx="10.500" cy="6" r="1.700" fill="none" stroke="#f59aa3" strokeWidth="0.800" />
    </svg>
  );
}

const countries = [
  { code: "us", name: "United States", n: 1676 },
  { code: "fi", name: "Finland", n: 164 },
  { code: "ca", name: "Canada", n: 10 },
  { code: "sg", name: "Singapore", n: 5 },
];

const statuses = [
  { code: "404", n: 1499, look: "bg-[#fde9db] text-[#fb923c]" },
  { code: "200", n: 199, look: "bg-[#dcf4ea] text-[#34d399]" },
  { code: "301", n: 163, look: "bg-[#e7f0fe] text-[#60a5fa]" },
  { code: "403", n: 5, look: "bg-[#fee9ea] text-[#f87171]" },
];

function HeadRow({ first }) {
  return (
    <thead>
      <tr className="border-b border-[#edf0f7] text-[#4d5b70]">
        <th scope="col" className="py-5 pl-[34px] text-left font-semibold">{first}</th>
        <th scope="col" className="py-5 pr-[34px] text-right font-semibold">Total Visits</th>
      </tr>
    </thead>
  );
}

function CountryTable() {
  return (
    <table className="w-full text-[23px] leading-[33px] text-[#5f718a]">
      <HeadRow first="Country" />
      <tbody>
        {countries.map((c) => (
          <tr key={c.code} className="border-b border-[#edf0f7] align-top">
            <td className="py-5 pl-[34px]">
              <span className="flex items-center">
                <Flag code={c.code} />
                <span className="mx-1.5">{c.name}</span>
                <button type="button" aria-label={`Inspect ${c.name}`}><BsSearch size={23} /></button>
              </span>
            </td>
            <td className="py-5 pr-[34px]">
              <div className="ml-auto w-[170px] text-right">
                {c.n}
                <div className="mt-2 h-[7px] overflow-hidden rounded-full bg-[#e0dffb]">
                  <div
                    className="h-full rounded-full bg-linear-to-r from-[#6366f1] to-[#06b6d4]"
                    style={{ width: `${(c.n / 1676) * 100}%` }}
                  />
                </div>
              </div>
            </td>
          </tr>
        ))}
      </tbody>
    </table>
  );
}

function StatusTable() {
  return (
    <table className="w-full text-[23px] leading-[33px] text-[#5f718a]">
      <HeadRow first="HTTP Status" />
      <tbody>
        {statuses.map((s) => (
          <tr key={s.code} className="border-b border-[#edf0f7] align-top">
            <td className="py-5 pl-[34px]">
              <span className={`block h-[46px] w-fit rounded-[5px] px-[15px] font-['Inter',sans-serif] text-[21px] leading-[46px] ${s.look}`}>
                {s.code}
              </span>
            </td>
            <td className="py-5 pr-[34px] text-right">{s.n}</td>
          </tr>
        ))}
      </tbody>
    </table>
  );
}

function Panel({ Icon, title, chart, table, pad }) {
  return (
    <section className="overflow-hidden rounded-[10px] bg-white shadow-[0_10px_34px_rgba(15,23,42,0.14)]">
      <h2 className="flex h-[89px] items-center gap-[7px] px-[33px] text-[23px] text-[#5f718a]">
        <Icon size={23} className="text-[#5a6b82]" />
        {title}
        <button type="button" className="ml-auto flex items-center gap-[6px]">
          <FaCalendarDay size={24} className="text-[#5a6b82]" />
          Today
        </button>
      </h2>
      <div className="bg-[#f9fafe]">{chart}</div>
      <div className={`pt-7 pb-8 pl-[33px] ${pad}`}>{table}</div>
    </section>
  );
}

export default function App() {
  return (
    <div className="h-screen overflow-hidden bg-[#edf1fa] font-['Open_Sans',sans-serif]">
      <Header />
      <div className="flex gap-20 pr-[138px] pl-[63px]">
        <Sidebar />
        <main className="min-w-0 grow pt-[30px]">
          <Tabs />
          <div className="mt-[38px] grid grid-cols-4 gap-[27px]">
            {stats.map((s) => <StatCard key={s.title} {...s} />)}
          </div>
          <div className="mt-10 grid grid-cols-2 gap-[53px]">
            <Panel Icon={FaEarthAmericas} title="Countries Receiving the Most Requests" chart={<WorldMap />} table={<CountryTable />} pad="pr-11" />
            <Panel Icon={FaChartPie} title="HTTP Status Code Distribution" chart={<Pie />} table={<StatusTable />} pad="pr-[33px]" />
          </div>
        </main>
      </div>
    </div>
  );
}
